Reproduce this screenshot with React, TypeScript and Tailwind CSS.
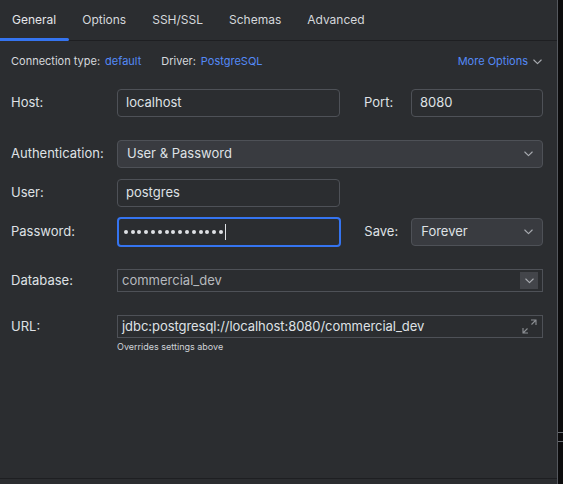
import React from "react";

const Chevron = ({ className = "" }: { className?: string }) => (
  <svg width="9" height="6" viewBox="0 0 9 6" className={className} fill="none">
    <path d="M0.8 1 L4.5 4.7 L8.2 1" stroke="#a8abb0" strokeWidth="1.1" strokeLinecap="round" strokeLinejoin="round" />
  </svg>
);

export default function App() {
  const font = { fontFamily: "Inter, 'Noto Sans', sans-serif" };
  const tabs = ["General", "Options", "SSH/SSL", "Schemas", "Advanced"];
  return (
    <div className="w-[563px] h-[484px] flex bg-[#0c0c0d] overflow-hidden" style={font}>
      <div className="w-[558px] h-full flex flex-col bg-[#2b2d30] border-r border-[#55585e] text-[#dfe1e5]">
        {/* tabs */}
        <div className="h-[41px] flex border-b border-[#1e1f22] shrink-0">
          {tabs.map((t, i) => (
            <div
              key={t}
              className={`relative h-full flex items-center pb-[1px] text-[12px] ${i === 0 ? "pl-[12px] pr-[13px] text-[#e4e6ea]" : "px-[13px] text-[#d5d8dc]"}`}
            >
              {t}
              {i === 0 && <div className="absolute left-0 right-0 bottom-[-1px] h-[3px] bg-[#3574f0] rounded-r-[2px]" />}
            </div>
          ))}
        </div>

        <div className="flex-1 flex flex-col pl-[11px] pr-[14px]">
          {/* connection info */}
          <div className="h-[40px] flex items-center text-[11px] pt-[1px]">
            <span className="text-[#d5d8dc]">Connection type:</span>
            <span className="ml-[5px] text-[#548af7]">default</span>
            <span className="ml-[20px] text-[#d5d8dc]">Driver:</span>
            <span className="ml-[5px] text-[#548af7]">PostgreSQL</span>
            <span className="ml-auto mr-[1px] flex items-center gap-[5px] text-[#548af7] text-[11px]">
              More Options <Chevron />
            </span>
          </div>

          {/* host row */}
          <div className="mt-[8px] flex items-center text-[13px]">
            <div className="w-[106px]">Host:</div>
            <div className="w-[223px] h-[28px] rounded-[4px] border border-[#4e5157] flex items-center pl-[8px]">localhost</div>
            <div className="ml-[24px] w-[47px]">Port:</div>
            <div className="w-[132px] h-[28px] rounded-[4px] border border-[#4e5157] flex items-center pl-[8px]">8080</div>
          </div>

          {/* auth */}
          <div className="mt-[23px] flex items-center text-[13px]">
            <div className="w-[106px]">Authentication:</div>
            <div className="w-[426px] h-[28px] rounded-[4px] border border-[#4e5157] bg-[#393b40] flex items-center pl-[9px] pr-[9px]">
              <span>User &amp; Password</span>
              <Chevron className="ml-auto" />
            </div>
          </div>

          {/* user */}
          <div className="mt-[11px] flex items-center text-[13px]">
            <div className="w-[106px]">User:</div>
            <div className="w-[223px] h-[28px] rounded-[4px] border border-[#4e5157] flex items-center pl-[8px]">postgres</div>
          </div>

          {/* password */}
          <div className="mt-[10px] flex items-center text-[13px]">
            <div className="w-[106px]">Password:</div>
            <div className="w-[225px] h-[30px] rounded-[4px] border-2 border-[#3574f0] flex items-center pl-[5px]">
              <div className="flex items-center gap-[2.8px]">
                {Array.from({ length: 15 }).map((_, i) => (
                  <div key={i} className="w-[4px] h-[4px] rounded-full bg-[#dfe1e5]" />
                ))}
              </div>
              <div className="ml-[2px] w-[1px] h-[16px] bg-[#dfe1e5]" />
            </div>
            <div className="ml-[23px] w-[47px]">Save:</div>
            <div className="w-[132px] h-[28px] rounded-[4px] border border-[#4e5157] bg-[#393b40] flex items-center pl-[9px] pr-[9px]">
              <span>Forever</span>
              <Chevron className="ml-auto" />
            </div>
          </div>

          {/* database */}
          <div className="mt-[22px] flex items-center text-[13px]">
            <div className="w-[106px]">Database:</div>
            <div className="w-[426px] h-[23px] border border-[#4e5157] flex items-center pl-[4px] pr-[4px]">
              <span className="text-[#b6b9be]">commercial_dev</span>
              <div className="ml-auto w-[18px] h-[17px] bg-[#43454a] flex items-center justify-center">
                <Chevron />
              </div>
            </div>
          </div>

          {/* url */}
          <div className="mt-[23px] flex items-center text-[13px]">
            <div className="w-[106px]">URL:</div>
            <div className="w-[426px] h-[23px] border border-[#4e5157] flex items-center pl-[4px] pr-[5px]">
              <span className="tracking-[-0.05px]">jdbc:postgresql://localhost:8080/commercial_dev</span>
              <svg className="ml-auto" width="15" height="15" viewBox="0 0 15 15" fill="none">
                <path d="M9 1 H14 V6 M14 1 L9.5 5.5 M6 14 H1 V9 M1 14 L5.5 9.5" stroke="#8c8f94" strokeWidth="1.1" />
              </svg>
            </div>
          </div>
          <div className="mt-[2px] ml-[106px] text-[9px] text-[#d0d3d8]">Overrides settings above</div>

          <div className="flex-1" />
        </div>
        <div className="h-[6px] border-t border-[#1e1f22] shrink-0" />
      </div>
      <div className="flex-1 relative">
        <div className="absolute left-[0px] top-[432px] w-[5px] h-[1px] bg-[#6a6d72]" />
        <div className="absolute left-[0px] top-[441px] w-[5px] h-[1px] bg-[#6a6d72]" />
      </div>
    </div>
  );
}
